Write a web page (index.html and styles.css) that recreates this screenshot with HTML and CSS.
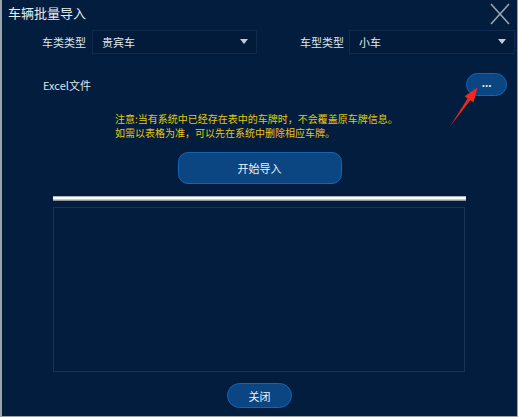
FILE: index.html
```html
<!DOCTYPE html>
<html lang="zh-CN">
<head>
<meta charset="utf-8">
<title>车辆批量导入</title>
<link rel="stylesheet" href="styles.css">
</head>
<body>
<div class="window">
  <div class="titlebar">
    <div class="title">车辆批量导入</div>
    <svg class="close-x" width="20" height="22" viewBox="0 0 20 22">
      <line x1="1" y1="1" x2="19" y2="21" stroke="#9aa3ae" stroke-width="1.6"/>
      <line x1="19" y1="1" x2="1" y2="21" stroke="#9aa3ae" stroke-width="1.6"/>
    </svg>
  </div>

  <div class="select-row">
    <div class="label label-1">车类类型</div>
    <div class="select"><span>贵宾车</span><i class="caret"></i></div>
    <div class="label label-2">车型类型</div>
    <div class="select"><span>小车</span><i class="caret"></i></div>
  </div>

  <div class="file-row">
    <div class="label">Excel文件</div>
    <div class="btn btn-browse">...</div>
  </div>

  <div class="notice">
    <div class="notice-line">注意:当有系统中已经存在表中的车牌时，不会覆盖原车牌信息。</div>
    <div class="notice-line">如需以表格为准，可以先在系统中删除相应车牌。</div>
  </div>

  <div class="btn btn-start">开始导入</div>

  <div class="progress"></div>

  <div class="logbox"></div>

  <div class="btn btn-close">关闭</div>

  <svg class="arrow" width="45" height="50" viewBox="440 80 45 50">
    <polygon points="477.5,87.5 473.5,102.5 470.3,100.2 450,126.5 467.6,98.4 464.6,96.2" fill="#f2281c"/>
  </svg>
</div>
</body>
</html>
```

FILE: styles.css
```css
* { box-sizing: border-box; }

html, body {
  margin: 0;
  padding: 0;
  background: #031d3e;
}

body {
  font-family: "Noto Sans CJK SC", "Noto Sans", "DejaVu Sans", sans-serif;
  color: #e4e8ee;
}

.window {
  position: relative;
  width: 518px;
  height: 417px;
  background: #031d3e;
  border-left: 2px solid #9ca2a9;
  border-right: 1px solid #9ca2a9;
  border-bottom: 1px solid #9ca2a9;
  display: flex;
  flex-direction: column;
}

.titlebar {
  height: 30px;
  display: flex;
  justify-content: space-between;
  align-items: flex-start;
}

.title {
  padding-left: 6px;
  font-size: 13px;
  line-height: 26px;
  color: #e8ecf1;
}

.close-x {
  margin-top: 3px;
  margin-right: 7px;
}

.select-row {
  display: grid;
  grid-template-columns: 90px 165px 92px 166px;
  height: 24px;
}

.label {
  font-size: 11px;
  color: #dfe4ea;
  line-height: 24px;
  white-space: nowrap;
}

.label-1 { text-align: right; padding-right: 6px; }
.label-2 { text-align: right; padding-right: 5px; }

.select {
  border: 1px solid #0f2a4c;
  background: #021b3b;
  display: flex;
  align-items: center;
  justify-content: space-between;
  padding: 0 8px 0 9px;
  font-size: 11px;
  color: #e4e8ee;
}

.caret {
  width: 0;
  height: 0;
  border-left: 4px solid transparent;
  border-right: 4px solid transparent;
  border-top: 5px solid #c6cbd2;
  margin-top: -1px;
}

.file-row {
  margin-top: 19px;
  height: 23px;
  display: flex;
  align-items: center;
  padding-left: 41px;
}

.btn {
  background: #0b4682;
  border: 1px solid #1764b2;
  color: #eef2f7;
  display: flex;
  align-items: center;
  justify-content: center;
  font-size: 11px;
}

.btn-browse {
  margin-left: auto;
  margin-right: 10px;
  width: 41px;
  height: 23px;
  border-radius: 12px;
  font-size: 10px;
  font-weight: bold;
  line-height: 1;
  padding-bottom: 3px;
}

.notice {
  margin-top: 16px;
  padding-left: 113px;
  font-size: 10px;
  color: #e6c70c;
  white-space: nowrap;
}

.notice-line {
  height: 14px;
  line-height: 14px;
}

.btn-start {
  margin: 12px auto 0;
  width: 164px;
  height: 32px;
  border-radius: 10px;
}

.progress {
  margin-top: 12px;
  margin-left: 51px;
  width: 413px;
  height: 5px;
  background: linear-gradient(#aeb3b9 0%, #aeb3b9 20%, #f4f5f6 20%, #ffffff 60%, #8e949b 80%, #8e949b 100%);
}

.logbox {
  margin-top: 6px;
  margin-left: 51px;
  width: 412px;
  height: 165px;
  border: 1px solid #1a3353;
  background: #031d3e;
}

.btn-close {
  margin: 11px auto 0;
  width: 65px;
  height: 25px;
  border-radius: 13px;
}

.arrow {
  position: absolute;
  left: 438px;
  top: 80px;
}
```
